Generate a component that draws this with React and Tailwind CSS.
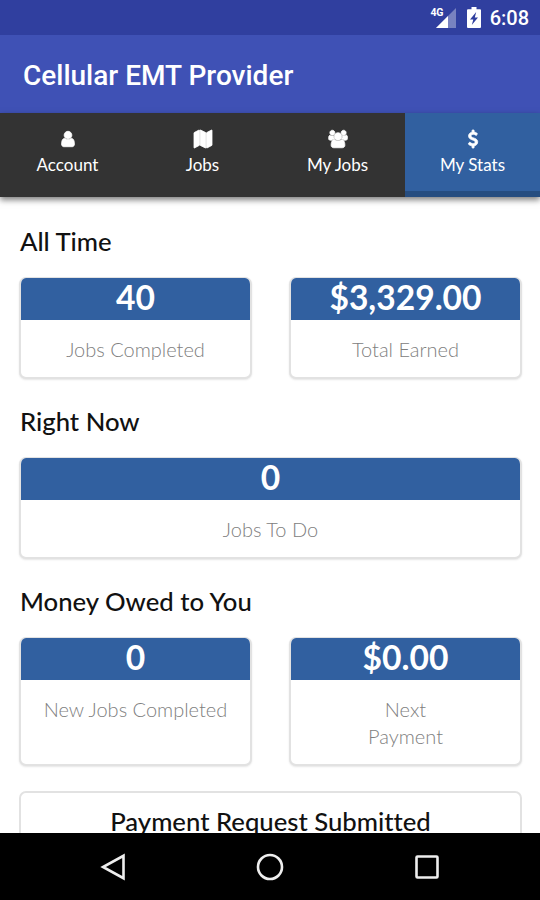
/**
 * App.jsx
 * Provider stats screen: earnings and job totals inside the phone chrome.
 */

import React from "react";

const ICONS = {
  user: {
    viewBox: "0 0 1280 1792",
    d: "M1280 1399q0 109-62.5 187t-150.5 78h-854q-88 0-150.5-78t-62.5-187q0-85 8.5-160.5t31.5-152 58.5-131 94-89 134.5-34.5q131 128 313 128t313-128q76 0 134.5 34.5t94 89 58.5 131 31.5 152 8.5 160.5zm-256-887q0 159-112.5 271.5t-271.5 112.5-271.5-112.5-112.5-271.5 112.5-271.5 271.5-112.5 271.5 112.5 112.5 271.5z",
  },
  map: {
    viewBox: "0 0 1792 1792",
    d: "M512 0q13 0 22.5 9.5t9.5 22.5v1472q0 20-17 28l-480 256q-7 4-15 4-13 0-22.5-9.5t-9.5-22.5v-1472q0-20 17-28l480-256q7-4 15-4zm1248 0q13 0 22.5 9.5t9.5 22.5v1472q0 20-17 28l-480 256q-7 4-15 4-13 0-22.5-9.5t-9.5-22.5v-1472q0-20 17-28l480-256q7-4 15-4zm-1120 0q8 0 14 3l512 256q18 10 18 29v1472q0 13-9.5 22.5t-22.5 9.5q-8 0-14-3l-512-256q-18-10-18-29v-1472q0-13 9.5-22.5t22.5-9.5z",
  },
  users: {
    viewBox: "0 0 2048 1792",
    d: "M657 896q-162 5-265 128h-134q-82 0-138-40.5t-56-118.5q0-353 124-353 6 0 43.5 21t97.5 42.5 119 21.5q67 0 133-23-5 37-5 66 0 159 93 287zm1071 637q0 120-73 189.5t-194 69.5h-874q-121 0-194-69.5t-73-189.5q0-53 3.5-103.5t14-109 26.5-108.5 43-97.5 62-81 85.5-53.5 111.5-20q10 0 43 21.5t73 48 107 48 135 21.5 135-21.5 107-48 73-48 43-21.5q61 0 111.5 20t85.5 53.5 62 81 43 97.5 26.5 108.5 14 109 3.5 103.5zm-1024-1277q0 106-75 181t-181 75-181-75-75-181 75-181 181-75 181 75 75 181zm704 384q0 159-112.5 271.5t-271.5 112.5-271.5-112.5-112.5-271.5 112.5-271.5 271.5-112.5 271.5 112.5 112.5 271.5zm576 225q0 78-56 118.5t-138 40.5h-134q-103-123-265-128 93-128 93-287 0-29-5-66 66 23 133 23 59 0 119-21.5t97.5-42.5 43.5-21q124 0 124 353zm-128-609q0 106-75 181t-181 75-181-75-75-181 75-181 181-75 181 75 75 181z",
  },
  dollar: {
    viewBox: "0 0 1792 1792",
    d: "M1362 1185q0 153-99.5 263.5t-258.5 136.5v175q0 14-9 23t-23 9h-135q-13 0-22.5-9.5t-9.5-22.5v-175q-66-9-127.5-31t-101.5-44.5-74-48-46.5-37.5-17.5-18q-17-21-2-41l103-135q7-10 23-12 15-2 24 9l2 2q113 99 243 125 37 8 74 8 81 0 142.5-43t61.5-122q0-28-15-53t-33.5-42-58.5-37.5-66-32-80-32.5q-39-16-61.5-25t-61.5-26.5-62.5-31-56.5-35.5-53.5-42.5-43.5-49-35.5-58-21-66.5-8.5-78q0-138 98-242t255-134v-180q0-13 9.5-22.5t22.5-9.5h135q14 0 23 9t9 23v176q57 6 110.5 23t87 33.5 63.5 37.5 39 29 15 14q17 18 5 38l-81 146q-8 15-23 16-14 3-27-7-3-3-14.5-12t-39-26.5-58.5-32-74.5-26-85.5-11.5q-95 0-155 43t-60 111q0 26 8.5 48t29.5 41.5 39.5 33 56 31 60.5 27 70 27.5q53 20 81 31.5t76 35 75.5 42.5 62 50 53 63.5 31.5 76.5 13 94z",
  },
};

const TABS = [
  { id: "account", label: "Account", icon: "user" },
  { id: "jobs", label: "Jobs", icon: "map" },
  { id: "my-jobs", label: "My Jobs", icon: "users" },
  { id: "my-stats", label: "My Stats", icon: "dollar" },
];

function StatusBar() {
  return (
    <div className="flex h-[35px] shrink-0 items-center justify-end bg-[#303f9f] pr-[11px] text-white">
      {/* Signal */}
      <svg className="h-[24px] w-[28px]" viewBox="0 0 28 24" aria-label="4G signal">
        <path d="M26 2v20H6z" fill="#fff" opacity="0.35" />
        <path d="M18 10v12H6z" fill="#fff" />
        <text x="0.5" y="10" fontSize="10.5" fontWeight="700" fontFamily="Roboto, sans-serif" fill="#fff" textLength="13">
          4G
        </text>
      </svg>
      {/* Battery */}
      <svg className="ml-[9px] h-[21px] w-[14px]" viewBox="0 0 14 21" aria-label="Charging">
        <path d="M4.5 0h5v2.2H13a1 1 0 0 1 1 1V20a1 1 0 0 1-1 1H1a1 1 0 0 1-1-1V3.2a1 1 0 0 1 1-1h3.5z" fill="#fff" />
        <path d="M9.2 5 3 12.5h3.3L4.800 18 11 10.500H7.800z" fill="#303f9f" />
      </svg>
      <span className="ml-[9px] font-['Roboto',sans-serif] text-[20px] font-medium leading-none">6:08</span>
    </div>
  );
}

function TabBar({ active }) {
  return (
    <nav className="relative z-10 grid h-[84px] shrink-0 grid-cols-4 bg-[#333] shadow-[0_3px_6px_rgba(0,0,0,0.5)]">
      {TABS.map((tab) => (
        <button
          key={tab.id}
          className={`flex flex-col items-center border-b-[6px] pt-[17px] text-white ${
            tab.id === active ? "border-[#264d80] bg-[#3160a0]" : "border-transparent"
          }`}
        >
          <svg
            className="h-[18px] w-[20px] overflow-visible"
            viewBox={ICONS[tab.icon].viewBox}
            fill="currentColor"
            stroke="currentColor"
            strokeWidth="80"
          >
            <path d={ICONS[tab.icon].d} />
          </svg>
          <span className="mt-[5px] text-[17px] leading-6">{tab.label}</span>
        </button>
      ))}
    </nav>
  );
}

function StatCard({ value, label }) {
  return (
    <div className="overflow-hidden rounded-[7px] border-2 border-t border-[#e2e2e2] bg-white text-center shadow-[0_1px_2px_rgba(0,0,0,0.1)]">
      <div className="h-[42px] bg-[#3160a0] text-[33.6px] font-bold leading-[39px] text-white">{value}</div>
      <div className="pt-[16px] pb-[14px] text-[20px] font-light leading-[27px] text-[#808080]">{label}</div>
    </div>
  );
}

function Section({ title, columns = 2, children }) {
  return (
    <section className="mb-[26px]">
      <h2 className="mb-[19px] pl-[1px] text-[25.7px] font-medium leading-[33px] text-[#111] [font-variant-ligatures:none]">
        {title}
      </h2>
      <div className={`grid gap-[37px] ${columns === 2 ? "grid-cols-2" : "grid-cols-1"}`}>{children}</div>
    </section>
  );
}

function NavigationBar() {
  return (
    <div className="flex h-[67px] shrink-0 items-center justify-between bg-black px-[98px]">
      <svg className="h-[30px] w-[30px]" viewBox="0 0 30 30" fill="none" stroke="#eee" strokeWidth="2.6">
        <path d="M25.5 3.8v22.4L5 15z" />
      </svg>
      <svg className="h-[30px] w-[30px]" viewBox="0 0 30 30" fill="none" stroke="#eee" strokeWidth="2.6">
        <circle cx="15" cy="15" r="12" />
      </svg>
      <svg className="h-[30px] w-[30px]" viewBox="0 0 30 30" fill="none" stroke="#eee" strokeWidth="2.6">
        <rect x="4.5" y="4.5" width="21" height="21" rx="1" />
      </svg>
    </div>
  );
}

export default function App() {
  return (
    <div className="flex h-[900px] w-[540px] flex-col overflow-hidden bg-white font-['Lato',sans-serif]">
      <StatusBar />
      <header className="flex h-[78px] shrink-0 items-center bg-[#3f51b5] pt-[3px] pl-[23px]">
        <h1 className="font-['Roboto',sans-serif] text-[28px] font-medium leading-none text-white">
          Cellular EMT Provider
        </h1>
      </header>
      <TabBar active="my-stats" />

      <main className="min-h-0 flex-1 overflow-hidden pt-[28px] pr-[18px] pl-[19px]">
        <Section title="All Time">
          <StatCard value="40" label="Jobs Completed" />
          <StatCard value="$3,329.00" label="Total Earned" />
        </Section>
        <Section title="Right Now" columns={1}>
          <StatCard value="0" label="Jobs To Do" />
        </Section>
        <Section title="Money Owed to You">
          <StatCard value="0" label="New Jobs Completed" />
          <StatCard value="$0.00" label={<>Next<br />Payment</>} />
        </Section>

        {/* Payment request */}
        <div className="-mt-[1px] h-[120px] rounded-[7px] border-2 border-[#e2e2e2] pt-[11px] text-center">
          <h2 className="text-[25.7px] font-medium leading-[34px] text-[#111] [font-variant-ligatures:none]">
            Payment Request Submitted
          </h2>
        </div>
      </main>

      <NavigationBar />
    </div>
  );
}
